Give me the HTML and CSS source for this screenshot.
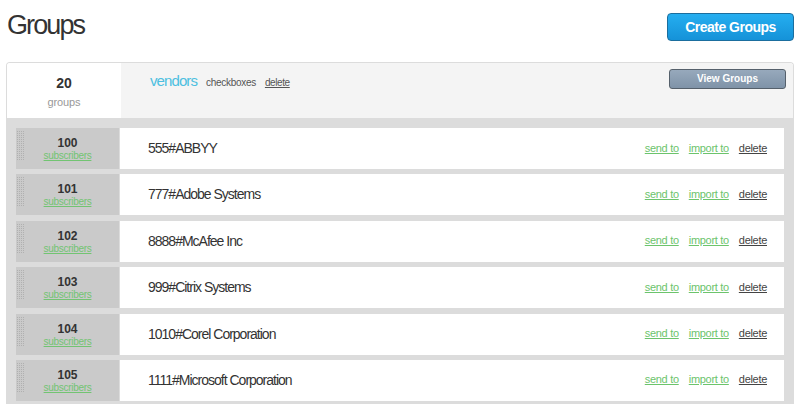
FILE: index.html
```html
<!DOCTYPE html>
<html>
<head>
<meta charset="utf-8">
<link rel="stylesheet" href="styles.css">
</head>
<body>
<div class="page">
  <div class="topbar">
    <h1 class="title">Groups</h1>
    <a class="btn-create" href="#">Create Groups</a>
  </div>
  <div class="panel">
    <div class="panel-head">
      <div class="count-cell">
        <div class="count">20</div>
        <div class="count-label">groups</div>
      </div>
      <div class="head-main">
        <div class="head-links">
          <span class="group-name">vendors</span>
          <span class="head-meta">checkboxes</span>
          <a class="head-delete" href="#">delete</a>
        </div>
        <a class="btn-view" href="#">View Groups</a>
      </div>
    </div>
    <div class="list">
      <div class="row">
        <div class="sub-cell"><span class="handle"></span><div class="sub-num">100</div><a class="sub-link" href="#">subscribers</a></div>
        <div class="name-cell"><span class="name">555#ABBYY</span><div class="actions"><a class="act-green" href="#">send to</a><a class="act-green" href="#">import to</a><a class="act-del" href="#">delete</a></div></div>
      </div>
      <div class="row">
        <div class="sub-cell"><span class="handle"></span><div class="sub-num">101</div><a class="sub-link" href="#">subscribers</a></div>
        <div class="name-cell"><span class="name">777#Adobe Systems</span><div class="actions"><a class="act-green" href="#">send to</a><a class="act-green" href="#">import to</a><a class="act-del" href="#">delete</a></div></div>
      </div>
      <div class="row">
        <div class="sub-cell"><span class="handle"></span><div class="sub-num">102</div><a class="sub-link" href="#">subscribers</a></div>
        <div class="name-cell"><span class="name">8888#McAfee Inc</span><div class="actions"><a class="act-green" href="#">send to</a><a class="act-green" href="#">import to</a><a class="act-del" href="#">delete</a></div></div>
      </div>
      <div class="row">
        <div class="sub-cell"><span class="handle"></span><div class="sub-num">103</div><a class="sub-link" href="#">subscribers</a></div>
        <div class="name-cell"><span class="name">999#Citrix Systems</span><div class="actions"><a class="act-green" href="#">send to</a><a class="act-green" href="#">import to</a><a class="act-del" href="#">delete</a></div></div>
      </div>
      <div class="row">
        <div class="sub-cell"><span class="handle"></span><div class="sub-num">104</div><a class="sub-link" href="#">subscribers</a></div>
        <div class="name-cell"><span class="name">1010#Corel Corporation</span><div class="actions"><a class="act-green" href="#">send to</a><a class="act-green" href="#">import to</a><a class="act-del" href="#">delete</a></div></div>
      </div>
      <div class="row">
        <div class="sub-cell"><span class="handle"></span><div class="sub-num">105</div><a class="sub-link" href="#">subscribers</a></div>
        <div class="name-cell"><span class="name">1111#Microsoft Corporation</span><div class="actions"><a class="act-green" href="#">send to</a><a class="act-green" href="#">import to</a><a class="act-del" href="#">delete</a></div></div>
      </div>
    </div>
  </div>
</div>
</body>
</html>
```

FILE: styles.css
```css
html, body {
  margin: 0;
  padding: 0;
  background: #fff;
  font-family: "Liberation Sans", Arial, sans-serif;
  color: #333;
  overflow: hidden;
}

.page {
  padding: 0 6px;
}

.topbar {
  display: flex;
  justify-content: space-between;
  align-items: flex-start;
  padding-top: 9px;
  margin-bottom: 21px;
}

.title {
  margin: 0;
  font-size: 27px;
  line-height: 32px;
  font-weight: normal;
  letter-spacing: -1.9px;
  color: #333;
  padding-left: 1px;
}

.btn-create {
  margin-top: 4px;
  box-sizing: border-box;
  width: 127px;
  height: 28px;
  line-height: 26px;
  text-align: center;
  color: #fff;
  font-weight: bold;
  font-size: 14px;
  letter-spacing: -0.5px;
  text-decoration: none;
  background: linear-gradient(#25aef0, #1592d8);
  border: 1px solid #1b6e9e;
  border-radius: 4px;
}

.panel {
  border: 1px solid #dcdcdc;
  border-bottom: 0;
  border-radius: 4px 4px 0 0;
  overflow: hidden;
}

.panel-head {
  display: flex;
  height: 55px;
}

.count-cell {
  width: 114px;
  background: #fff;
  text-align: center;
  padding-top: 11px;
  box-sizing: border-box;
}

.count {
  font-size: 14px;
  font-weight: bold;
  line-height: 18px;
  color: #333;
}

.count-label {
  margin-top: 3px;
  font-size: 11px;
  line-height: 14px;
  color: #999;
  letter-spacing: -0.1px;
}

.head-main {
  flex: 1;
  background: #f4f4f4;
  display: flex;
  justify-content: space-between;
  align-items: flex-start;
  padding: 6px 7px 0 29px;
}

.head-links {
  padding-top: 3px;
  display: flex;
  align-items: baseline;
  line-height: 18px;
}

.group-name {
  font-size: 15px;
  letter-spacing: -0.9px;
  color: #4dbfe0;
}

.head-meta {
  margin-left: 9px;
  font-size: 10px;
  letter-spacing: -0.3px;
  color: #555;
}

.head-delete {
  margin-left: 9px;
  font-size: 10px;
  letter-spacing: -0.4px;
  color: #555;
}

.btn-view {
  box-sizing: border-box;
  width: 117px;
  height: 20px;
  line-height: 18px;
  text-align: center;
  color: #fff;
  font-weight: bold;
  font-size: 10px;
  text-decoration: none;
  background: linear-gradient(#97a9bc, #7f93a8);
  border: 1px solid #55606b;
  border-radius: 3px;
}

.list {
  background: #dcdcdc;
  padding: 10px 9px 0 9px;
  height: 276px;
  overflow: hidden;
}

.row {
  display: flex;
  height: 41px;
  margin-bottom: 5.4px;
}

.sub-cell {
  position: relative;
  width: 103px;
  background: #cacaca;
  text-align: center;
  padding-top: 8px;
  box-sizing: border-box;
}

.handle {
  position: absolute;
  left: 1px;
  top: 3px;
  width: 7px;
  height: 29px;
  background:
    linear-gradient(to right, transparent 1px, #cacaca 1px) 0 0 / 2px 2px,
    linear-gradient(to bottom, transparent 1px, #cacaca 1px) 0 0 / 2px 2px,
    #b0b0b0;
}

.sub-num {
  font-size: 12px;
  font-weight: bold;
  line-height: 14px;
  color: #333;
}

.sub-link {
  display: block;
  font-size: 10px;
  line-height: 12px;
  letter-spacing: -0.3px;
  color: #72c472;
}

.name-cell {
  flex: 1;
  margin-left: 1px;
  background: #fff;
  display: flex;
  align-items: center;
  justify-content: space-between;
  padding: 0 17px 0 28px;
}

.name {
  font-size: 14px;
  letter-spacing: -1px;
  color: #333;
  margin-top: -1px;
}

.actions {
  display: flex;
  gap: 10px;
  font-size: 11px;
  letter-spacing: -0.3px;
  margin-top: -2px;
}

.act-green {
  color: #6cc46c;
}

.act-del {
  color: #444;
}
```
